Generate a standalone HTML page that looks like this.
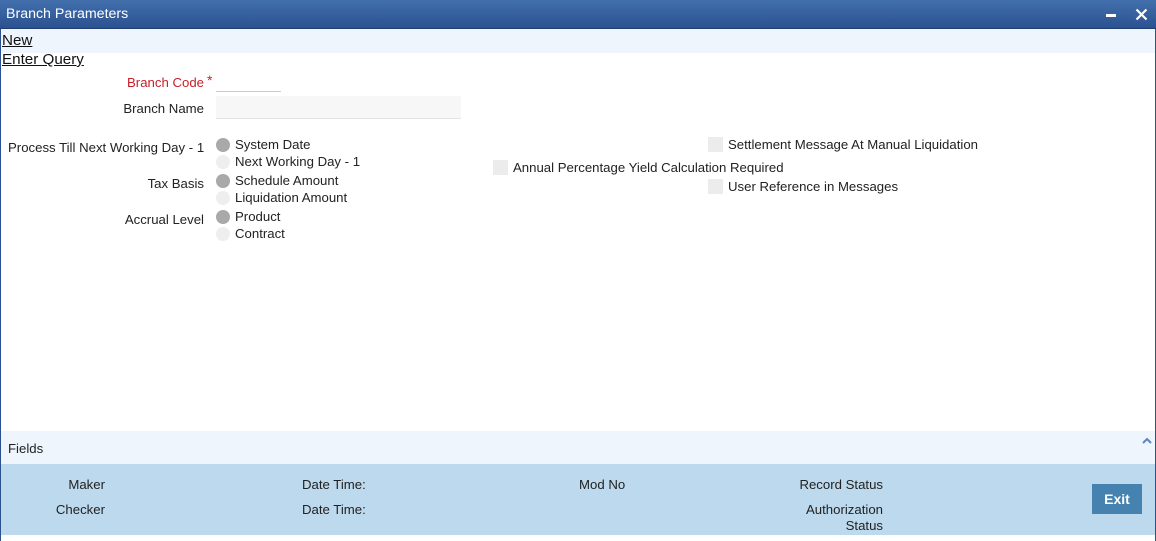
<!DOCTYPE html>
<html><head><style>
*{margin:0;padding:0;box-sizing:border-box}
body{width:1156px;height:541px;position:relative;overflow:hidden;background:#fff;font-family:"Liberation Sans",Arial,sans-serif;font-size:13.2px;color:#222}
.a{position:absolute;white-space:nowrap}
.r{text-align:right}
.rad{position:absolute;width:14px;height:14px;border-radius:50%;background:#eee}
.rad.on{background:#a9a9a9}
.cb{position:absolute;width:15px;height:15px;background:#ececec}
</style></head><body>
<div class="a" style="left:0;top:0;width:1156px;height:29px;background:linear-gradient(#4270ad,#2b5190);border-bottom:1px solid #1f3f74"></div>
<div class="a" style="left:6px;top:6px;color:#fff;font-size:14.2px">Branch Parameters</div>
<div class="a" style="left:1106px;top:14px;width:10px;height:3px;background:#fff"></div>
<svg class="a" style="left:1135px;top:8px" width="13" height="13"><path d="M1.5 1.5L11.5 11.5M11.5 1.5L1.5 11.5" stroke="#fff" stroke-width="2.2"/></svg>
<div class="a" style="left:0;top:29px;width:1px;height:512px;background:#2b5190"></div>
<div class="a" style="left:1155px;top:29px;width:1px;height:512px;background:#2b5190"></div>
<div class="a" style="left:1px;top:29px;width:1154px;height:24px;background:#eef5fd"></div>
<div class="a" style="left:2px;top:32px;font-size:15.2px;text-decoration:underline;color:#111">New</div>
<div class="a" style="left:2px;top:51px;font-size:15.2px;text-decoration:underline;color:#111">Enter Query</div>
<div class="a r" style="left:100px;width:104px;top:75px;color:#c8202a">Branch Code</div>
<div class="a" style="left:207px;top:72px;color:#c8202a;font-size:14px">*</div>
<div class="a" style="left:216px;top:91px;width:65px;height:1px;background:#ccc"></div>
<div class="a r" style="left:100px;width:104px;top:101px">Branch Name</div>
<div class="a" style="left:216px;top:96px;width:245px;height:23px;background:#f7f7f7;border-bottom:1px solid #e4e4e4"></div>
<div class="a" style="left:8px;top:140px">Process Till Next Working Day - 1</div>
<div class="a r" style="left:100px;width:104px;top:176px">Tax Basis</div>
<div class="a r" style="left:100px;width:104px;top:212px">Accrual Level</div>
<div class="rad on" style="left:216px;top:138px"></div><div class="a" style="left:235px;top:137px">System Date</div>
<div class="rad" style="left:216px;top:155px"></div><div class="a" style="left:235px;top:154px">Next Working Day - 1</div>
<div class="rad on" style="left:216px;top:174px"></div><div class="a" style="left:235px;top:173px">Schedule Amount</div>
<div class="rad" style="left:216px;top:191px"></div><div class="a" style="left:235px;top:190px">Liquidation Amount</div>
<div class="rad on" style="left:216px;top:210px"></div><div class="a" style="left:235px;top:209px">Product</div>
<div class="rad" style="left:216px;top:227px"></div><div class="a" style="left:235px;top:226px">Contract</div>
<div class="cb" style="left:708px;top:137px"></div><div class="a" style="left:728px;top:137px">Settlement Message At Manual Liquidation</div>
<div class="cb" style="left:493px;top:160px"></div><div class="a" style="left:513px;top:160px">Annual Percentage Yield Calculation Required</div>
<div class="cb" style="left:708px;top:179px"></div><div class="a" style="left:728px;top:179px">User Reference in Messages</div>
<div class="a" style="left:1px;top:431px;width:1154px;height:33px;background:#eef5fd"></div>
<div class="a" style="left:8px;top:441px">Fields</div>
<svg class="a" style="left:1142px;top:437px" width="10" height="7"><path d="M1 6L5 2L9 6" stroke="#5b84bd" stroke-width="2" fill="none"/></svg>
<div class="a" style="left:1px;top:464px;width:1154px;height:71px;background:#bdd9ed"></div>
<div class="a r" style="left:0;width:105px;top:477px">Maker</div>
<div class="a r" style="left:0;width:105px;top:502px">Checker</div>
<div class="a" style="left:302px;top:477px">Date Time:</div>
<div class="a" style="left:302px;top:502px">Date Time:</div>
<div class="a" style="left:579px;top:477px">Mod No</div>
<div class="a r" style="left:760px;width:123px;top:477px">Record Status</div>
<div class="a r" style="left:760px;width:123px;top:502px;line-height:16px">Authorization<br>Status</div>
<div class="a" style="left:1092px;top:484px;width:50px;height:30px;background:#4682b0;color:#fff;text-align:center;line-height:30px;font-size:14px;font-weight:bold">Exit</div>
</body></html>
